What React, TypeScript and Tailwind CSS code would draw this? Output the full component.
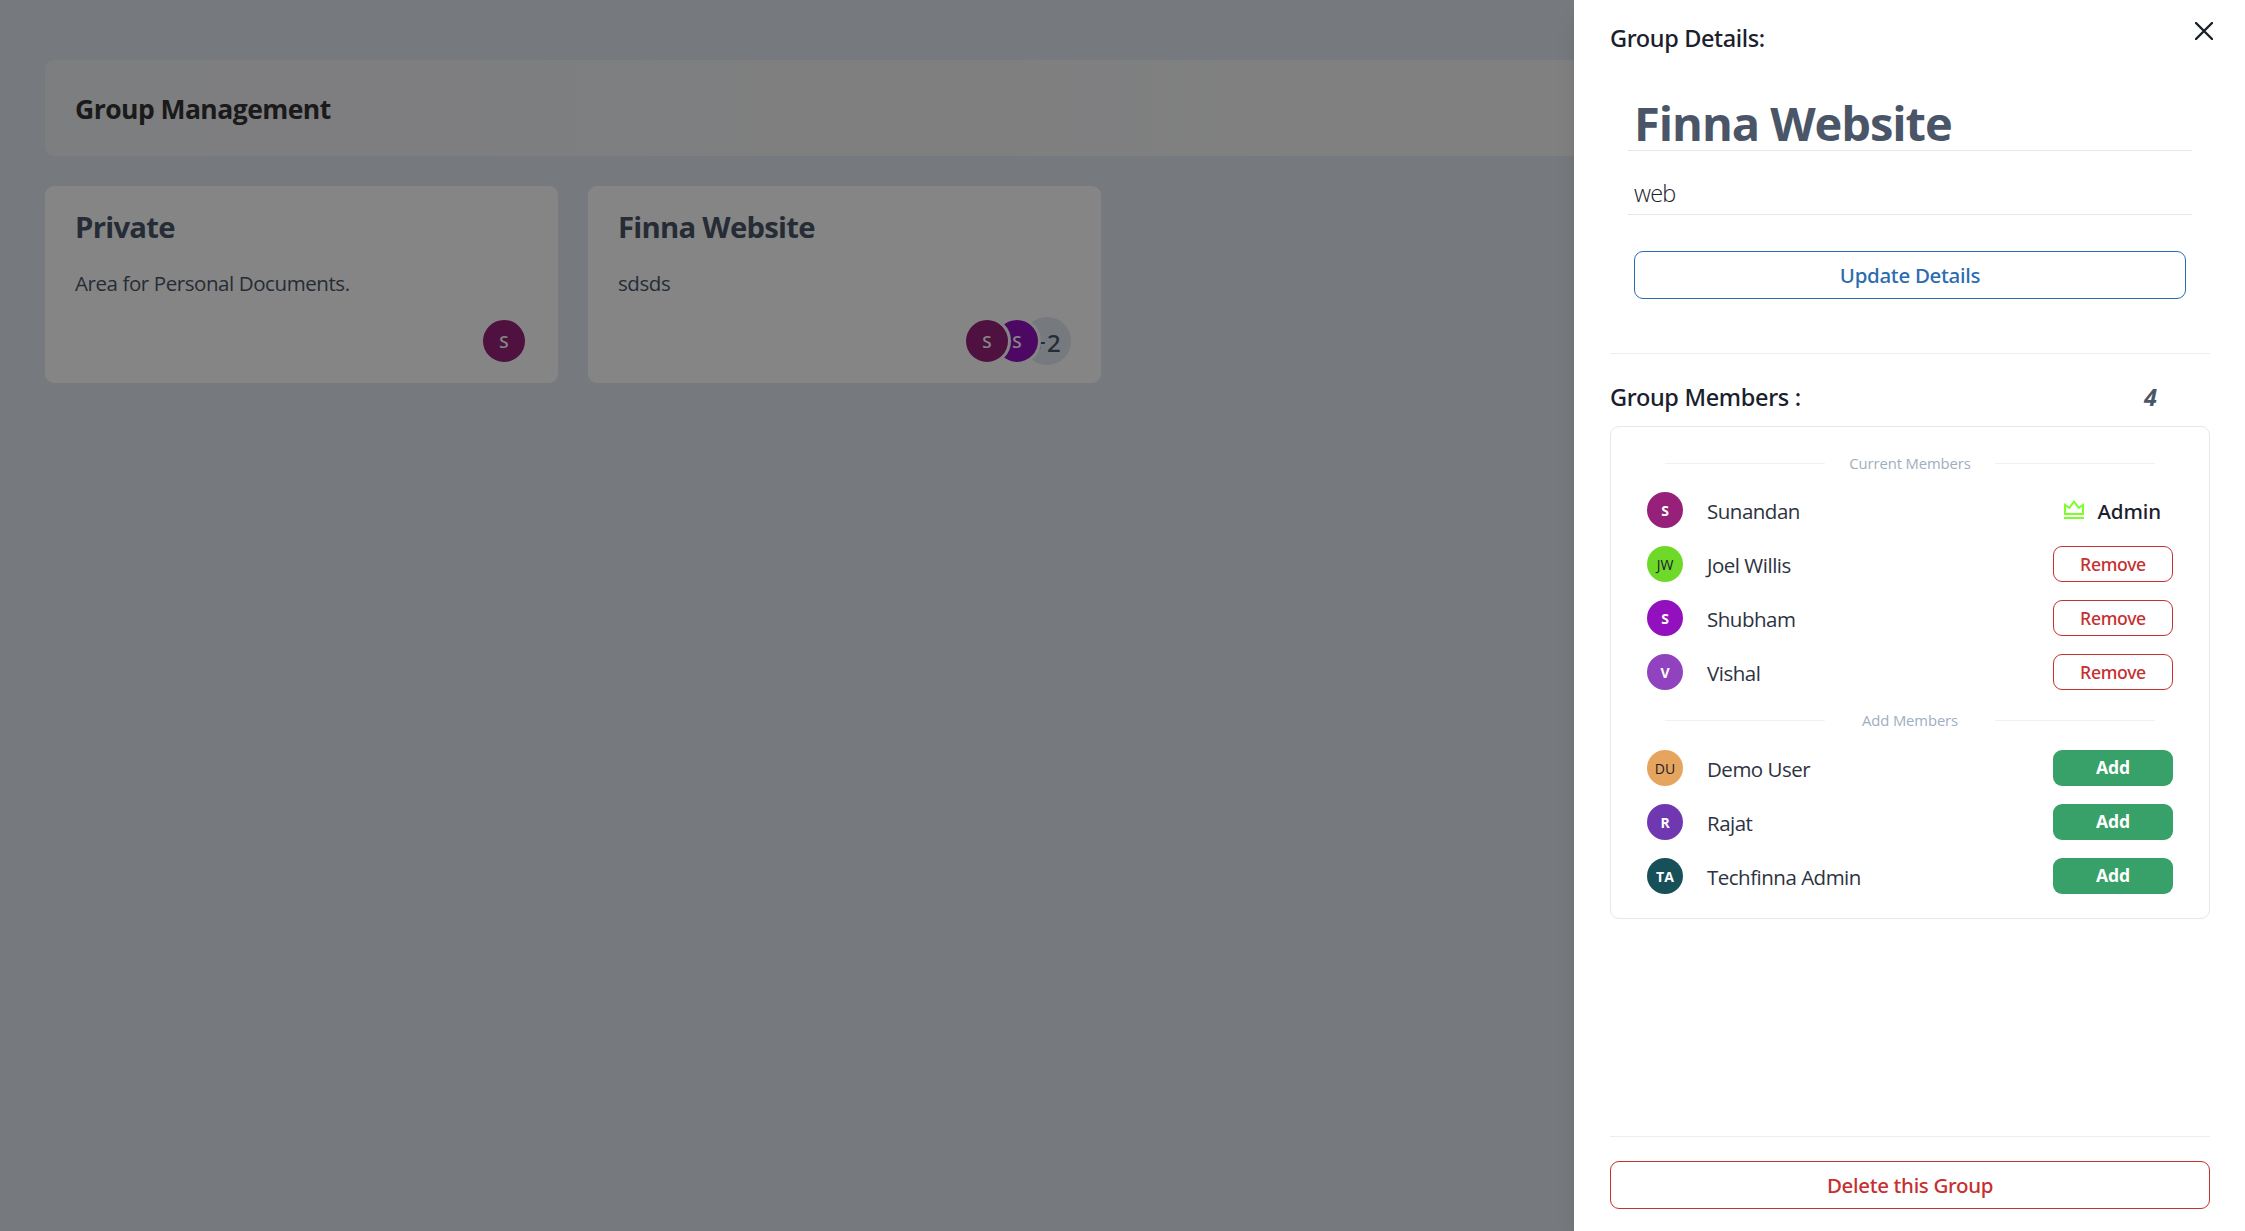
import type { ReactNode } from "react";
import { RiVipCrownLine } from "react-icons/ri";

type Member = { name: string; initials: string; color: string; dark?: boolean };

const current: Member[] = [
  { name: "Sunandan", initials: "S", color: "bg-[#97217a]" },
  { name: "Joel Willis", initials: "JW", color: "bg-[#6fd92a]", dark: true },
  { name: "Shubham", initials: "S", color: "bg-[#9210be]" },
  { name: "Vishal", initials: "V", color: "bg-[#9142be]" },
];

const available: Member[] = [
  { name: "Demo User", initials: "DU", color: "bg-[#e6a55e]", dark: true },
  { name: "Rajat", initials: "R", color: "bg-[#6f38b1]" },
  { name: "Techfinna Admin", initials: "TA", color: "bg-[#175058]" },
];

function CardAvatar({ color, overlap }: { color: string; overlap?: boolean }) {
  return (
    <div
      className={`relative flex size-12 items-center justify-center rounded-full border-[3px] border-white pt-0.5 text-[17px] font-semibold text-white ${color} ${overlap ? "-mr-[18px]" : ""}`}
    >
      S
    </div>
  );
}

function GroupCard({ title, text, children }: { title: string; text: string; children: ReactNode }) {
  return (
    <div className="flex h-[197px] w-[513px] flex-col rounded-[9px] bg-white px-[30px] pt-[23px] pb-[18px]">
      <h2 className="text-[29.3px] leading-9 font-bold tracking-[-0.75px] text-[#4a5568]">{title}</h2>
      <p className="mt-[22px] text-[20.5px] leading-8 tracking-[-0.42px] text-[#4a5568]">{text}</p>
      <div className="mt-auto flex justify-end">{children}</div>
    </div>
  );
}

function SectionLabel({ children, className }: { children: string; className: string }) {
  return (
    <div className={`flex h-[22px] items-center justify-between px-[54px] ${className}`}>
      <div className="h-px w-40 bg-[#edf2f7]" />
      <span className="pt-px text-[14.8px] tracking-[-0.1px] text-[#a0aec0]">{children}</span>
      <div className="h-px w-40 bg-[#edf2f7]" />
    </div>
  );
}

function MemberRow({ member, children }: { member: Member; children: ReactNode }) {
  return (
    <div className="flex h-9 items-center px-9">
      <div
        className={`flex size-9 items-center justify-center rounded-full pt-px text-[14px] ${member.color} ${member.dark ? "font-medium text-[#1a202c]" : "font-bold text-white"}`}
      >
        {member.initials}
      </div>
      <span className="ml-6 flex-1 pt-0.5 text-[20.5px] tracking-[-0.5px] text-[#2d3340]">{member.name}</span>
      {children}
    </div>
  );
}

export default function App() {
  return (
    <div className="relative h-[1231px] w-[2245px] overflow-hidden bg-[#e2e8f0] font-['Open_Sans','Noto_Sans',sans-serif]">
      <main className="flex flex-col gap-[30px] px-[45px] pt-[60px]">
        <header className="flex h-24 items-center rounded-[9px] bg-linear-to-r from-[#f0f1f5] to-[#f8f8f8] px-[30px] pt-1">
          <h1 className="text-[26.5px] font-bold tracking-[-0.54px] text-[#333]">Group Management</h1>
        </header>
        <div className="flex gap-[30px]">
          <GroupCard title="Private" text="Area for Personal Documents.">
            <CardAvatar color="bg-[#97217a]" />
          </GroupCard>
          <GroupCard title="Finna Website" text="sdsds">
            <div className="z-20">
              <CardAvatar color="bg-[#97217a]" overlap />
            </div>
            <div className="z-10">
              <CardAvatar color="bg-[#9210be]" overlap />
            </div>
            <div className="flex size-12 items-center justify-center rounded-full bg-[#e2e8f0] pt-[3px] font-['Noto_Sans',sans-serif] text-[24px] font-medium tracking-[1px] text-[#4a5568]">
              +2
            </div>
          </GroupCard>
        </div>
      </main>

      <div className="absolute inset-0 z-30 bg-black/48" />

      <aside className="absolute inset-y-0 right-0 z-40 flex w-[671px] flex-col bg-white pr-[35px] pl-9 text-[#1a202c] shadow-[0_15px_22px_-4px_rgba(0,0,0,0.1),0_6px_9px_-3px_rgba(0,0,0,0.05)]">
        <button className="absolute top-[22px] right-8 size-[18px]" aria-label="Close">
          <svg viewBox="0 0 18 18" className="block size-[18px]" stroke="#1a202c" strokeWidth="2.4" strokeLinecap="round">
            <path d="M1 1l16 16M17 1L1 17" />
          </svg>
        </button>

        <h3 className="mt-5 h-9 font-['Noto_Sans',sans-serif] text-[23.5px] leading-9 font-medium tracking-[-0.36px]">
          Group Details:
        </h3>

        <div className="mt-[39px] ml-[18px] h-14 w-[564px] border-b border-[#e2e8f0] pl-1.5 text-[47px] leading-[57px] font-bold tracking-[-1.05px] text-[#4a5568]">
          Finna Website
        </div>
        <div className="mt-[19px] ml-[18px] h-[45px] w-[564px] border-b border-[#e2e8f0] pl-1.5 text-[23.5px] leading-[46px] font-light tracking-[-0.8px]">
          web
        </div>
        <button className="mt-9 ml-6 h-12 w-[552px] rounded-[9px] border border-[#2b6cb0] font-['Noto_Sans',sans-serif] text-[20.5px] font-medium tracking-[-0.3px] text-[#2b6cb0]">
          Update Details
        </button>

        <div className="mt-[54px] h-px shrink-0 bg-[#eceef1]" />

        <div className="mt-[25px] flex h-9 items-center justify-between pr-[53px] font-['Noto_Sans',sans-serif] text-[23.5px] leading-9">
          <h3 className="font-medium tracking-[-0.32px]">Group Members :</h3>
          <span className="font-bold text-[#4a5568] italic">4</span>
        </div>

        <section className="mt-[11px] flex h-[493px] flex-col rounded-[9px] border border-[#e2e8f0]">
          <SectionLabel className="mt-[25px]">Current Members</SectionLabel>
          <div className="mt-[18px] flex flex-col gap-[18px]">
            {current.map((m, i) => (
              <MemberRow key={m.name} member={m}>
                {i === 0 ? (
                  <div className="flex items-center gap-3 pr-3">
                    <RiVipCrownLine className="size-6 text-[#7bff2b]" />
                    <span className="pt-0.5 font-['Noto_Sans',sans-serif] text-[20.5px] font-medium tracking-[-0.1px]">
                      Admin
                    </span>
                  </div>
                ) : (
                  <button className="h-9 w-[120px] rounded-[9px] border border-[#c53030] font-['Noto_Sans',sans-serif] text-[17.6px] font-medium tracking-[-0.3px] text-[#c53030]">
                    Remove
                  </button>
                )}
              </MemberRow>
            ))}
          </div>
          <SectionLabel className="mt-[19px]">Add Members</SectionLabel>
          <div className="mt-[19px] flex flex-col gap-[18px]">
            {available.map((m) => (
              <MemberRow key={m.name} member={m}>
                <button className="h-9 w-[120px] rounded-[9px] bg-[#38a169] pb-px text-[17.6px] font-bold tracking-[-0.1px] text-white">
                  Add
                </button>
              </MemberRow>
            ))}
          </div>
        </section>

        <div className="mt-auto mb-[22px]">
          <div className="h-px bg-[#eceef1]" />
          <button className="mt-6 h-12 w-full rounded-[9px] border border-[#c53030] font-['Noto_Sans',sans-serif] text-[20.5px] font-medium tracking-[-0.33px] text-[#c53030]">
            Delete this Group
          </button>
        </div>
      </aside>
    </div>
  );
}
